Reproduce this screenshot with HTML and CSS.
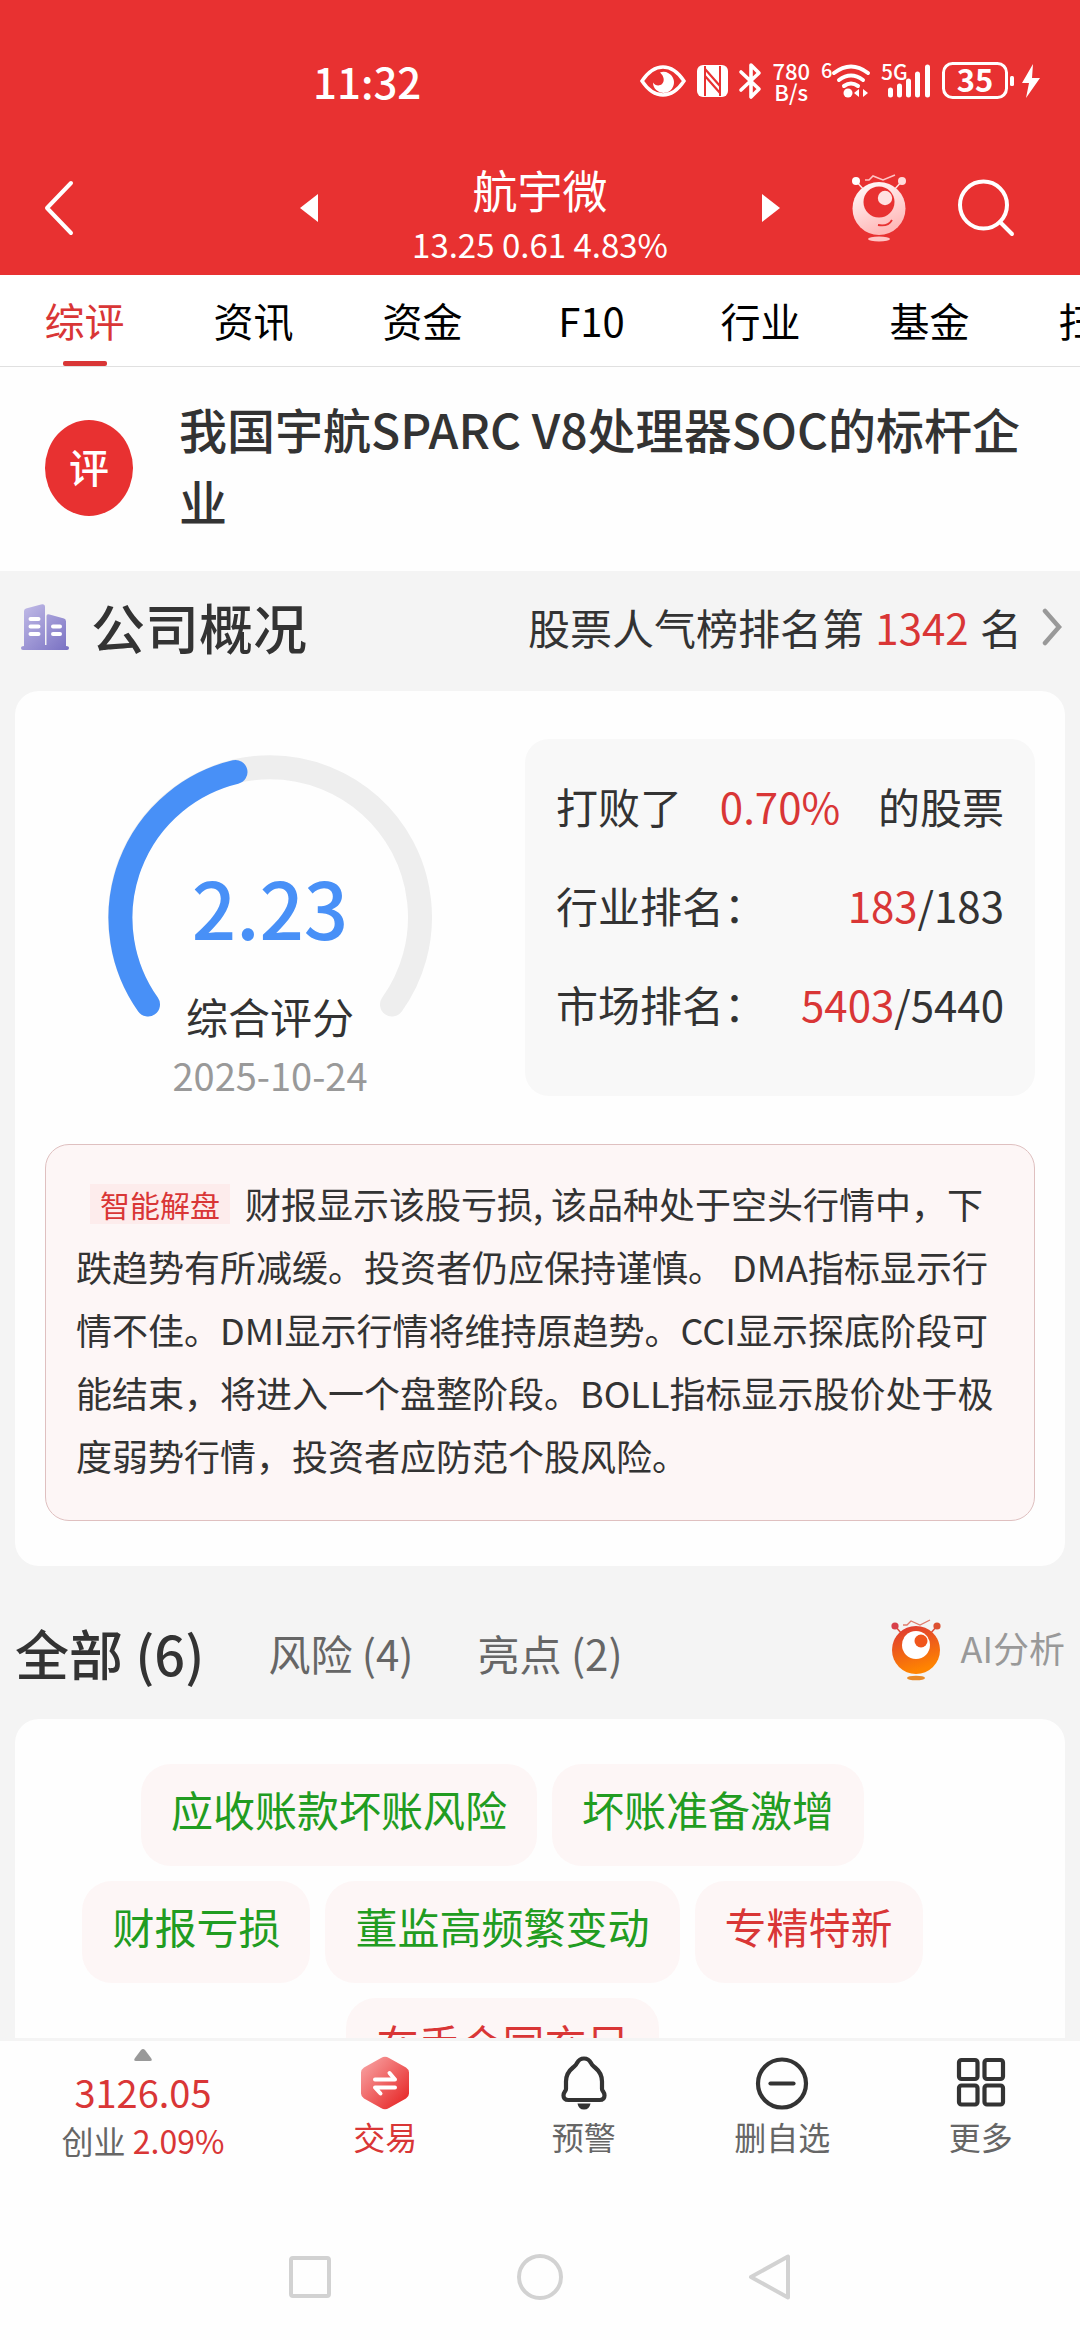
FILE: index.html
```html
<!DOCTYPE html>
<html lang="zh-CN">
<head>
<meta charset="utf-8">
<meta name="viewport" content="width=device-width, initial-scale=1">
<title>航宇微 - 综评</title>
<link rel="stylesheet" href="styles.css">
</head>
<body>
<div class="app">
  <header class="header">
    <div class="status">
      <time class="status-time">11:32</time>
      <div class="status-icons">
        <svg width="46" height="32" viewBox="0 0 46 32"><path d="M2 16C8 7 15 2 23 2s15 5 21 14c-6 9-13 14-21 14S8 25 2 16z" fill="none" stroke="#fff" stroke-width="3.400"/><path d="M20 7.500a10.500 10.500 0 1 1-7 10c2 3 6 4 9 1.500 3-3 2-8-2-11.500z" fill="#fff"/></svg>
        <svg width="31" height="32" viewBox="0 0 31 32"><rect width="31" height="32" rx="6" fill="#fff"/><path d="M8 1v30M23 1v30" stroke="#e83131" stroke-width="2"/><path d="M8 4l15 17M8 11l15 17" stroke="#e83131" stroke-width="2.200"/></svg>
        <svg width="22" height="36" viewBox="0 0 22 36"><path d="M2 9l18 17-8 8V2l8 8L2 27" fill="none" stroke="#fff" stroke-width="3.600" stroke-linejoin="round" stroke-linecap="round"/></svg>
        <div class="net-speed"><span>780</span><span>B/s</span></div>
        <svg class="status-svg" width="49" height="36" viewBox="0 0 49 36"><text x="0" y="15" font-size="20">6</text><g fill="none" stroke="#fff" stroke-width="4" stroke-linecap="round"><path d="M13 10q17-13 34 0"/><path d="M18 17q12-9 24 0"/><path d="M23 23q7-5 14 0"/></g><circle cx="27" cy="30" r="4.500" fill="#fff"/><path d="M33 30l5-4v8zM47 30l-5-4v8z" fill="#fff"/></svg>
        <svg class="status-svg" width="50" height="36" viewBox="0 0 50 36"><text x="0" y="17" font-size="21">5G</text><path d="M9.500 32v-5M18.500 32v-9M27.500 32v-14M36.500 32v-21M46.500 32v-28" stroke="#fff" stroke-width="5" stroke-linecap="round"/></svg>
        <svg class="status-svg battery" width="98" height="38" viewBox="0 0 98 38"><rect x="1.500" y="1.500" width="63" height="34" rx="9" fill="none" stroke="#fff" stroke-width="3"/><text x="33" y="30" font-size="31" text-anchor="middle">35</text><rect x="68" y="14" width="4" height="10" rx="1.500" fill="#fff"/><path d="M91 2L80 21h7l-3 15 14-20h-8z" fill="#fff"/></svg>
      </div>
    </div>
    <div class="titlebar">
      <button class="icon-btn back" type="button" aria-label="返回"><svg width="30" height="56" viewBox="0 0 30 56"><path d="M27 3L3 28l24 25" fill="none" stroke="#fff" stroke-width="4" stroke-linecap="round" stroke-linejoin="round"/></svg></button>
      <div class="stock">
        <button class="icon-btn" type="button" aria-label="上一只"><svg width="18" height="28" viewBox="0 0 18 28"><path d="M0 14L18 0v28z" fill="#fff"/></svg></button>
        <div class="stock-info">
          <h1 class="stock-name">航宇微</h1>
          <p class="stock-quote">13.25 0.61 4.83%</p>
        </div>
        <button class="icon-btn" type="button" aria-label="下一只"><svg width="18" height="28" viewBox="0 0 18 28"><path d="M18 14L0 0v28z" fill="#fff"/></svg></button>
      </div>
      <div class="actions">
        <button class="icon-btn" type="button" aria-label="智能助手">
          <svg width="54" height="68" viewBox="0 0 54 68">
            <defs><linearGradient id="pale" x1="0" y1="0" x2="0.400" y2="1"><stop offset="0" stop-color="#fff"/><stop offset="1" stop-color="#ffb9b9"/></linearGradient></defs>
            <path d="M4 7l8 9M50 7l-8 9" stroke="#ffe4e4" stroke-width="1.500"/>
            <circle cx="4" cy="7" r="4" fill="#fff"/><circle cx="50" cy="7" r="4" fill="#ffdcdc"/>
            <path d="M13 6h4l4-4 10 4 12-5" fill="none" stroke="#ffc4c4" stroke-width="1.500"/>
            <circle cx="27" cy="34.500" r="26.500" fill="url(#pale)"/>
            <circle cx="27" cy="28" r="15.500" fill="#e83131"/><circle cx="33" cy="24" r="7.200" fill="#ffe0e0"/>
            <path d="M26 51q10 2 14-5" fill="none" stroke="#e83131" stroke-width="1.800"/>
            <ellipse cx="27" cy="65" rx="11" ry="2.600" fill="#ffc4c4"/>
          </svg>
        </button>
        <button class="icon-btn" type="button" aria-label="搜索"><svg width="56" height="58" viewBox="0 0 56 58"><circle cx="25.500" cy="26" r="23.500" fill="none" stroke="#fff" stroke-width="4"/><path d="M42 43l12 12" stroke="#fff" stroke-width="4" stroke-linecap="round"/></svg></button>
      </div>
    </div>
  </header>

  <nav class="tabs">
    <a class="tab tab-active" href="#zp">综评</a>
    <a class="tab" href="#zx">资讯</a>
    <a class="tab" href="#zj">资金</a>
    <a class="tab" href="#f10">F10</a>
    <a class="tab" href="#hy">行业</a>
    <a class="tab" href="#jj">基金</a>
    <a class="tab" href="#sl">扫雷</a>
  </nav>

  <main class="content" id="zp">
    <section class="summary">
      <span class="summary-badge">评</span>
      <h2 class="summary-text">我国宇航SPARC V8处理器SOC的标杆企业</h2>
    </section>

    <div class="section-head">
      <svg width="48" height="46" viewBox="0 0 48 46">
        <defs><linearGradient id="violet" x1="0" y1="0" x2="1" y2="1"><stop offset="0" stop-color="#c3bde8"/><stop offset="1" stop-color="#7870c2"/></linearGradient></defs>
        <path d="M3 42V7q0-2 2-2.500L20 .400q4-1 4 2.600V41h1.500V12q0-2.500 3-1.500L43 14.500q2 .5 2 3V42q3 0 3 2t-2 2H2q-2 0-2-2t3-2z" fill="url(#violet)"/>
        <path d="M9.500 15h8M9.500 22.500h8M9.500 30h8M32 22.500h7M32 30h7" stroke="#fff" stroke-width="4" stroke-linecap="round"/>
      </svg>
      <h2 class="section-title">公司概况</h2>
      <a class="rank-link" href="#rank">
        <span>股票人气榜排名第 <b class="rank-no">1342</b> 名</span>
        <svg width="20" height="36" viewBox="0 0 20 36"><path d="M3 2l14 16L3 34" fill="none" stroke="#999" stroke-width="4.500" stroke-linecap="round"/></svg>
      </a>
    </div>

    <section class="card">
      <div class="overview">
        <div class="gauge">
          <svg class="gauge-arc" width="324" height="262" viewBox="0 0 324 262" fill="none" stroke-width="24" stroke-linecap="round">
            <path d="M40 248.500A150 150 0 1 1 284 248.500" stroke="#eee"/>
            <path d="M40 248.500A150 150 0 0 1 127.500 16" stroke="#4890f7"/>
          </svg>
          <div class="gauge-text">
            <strong class="gauge-value">2.23</strong>
            <span class="gauge-label">综合评分</span>
            <time class="gauge-date">2025-10-24</time>
          </div>
        </div>
        <dl class="ranks">
          <div class="rank-row"><dt>打败了</dt><dd class="red">0.70%</dd><dd>的股票</dd></div>
          <div class="rank-row"><dt>行业排名：</dt><dd><span class="red">183</span>/183</dd></div>
          <div class="rank-row"><dt>市场排名：</dt><dd><span class="red">5403</span>/5440</dd></div>
        </dl>
      </div>
      <p class="analysis"><span class="analysis-tag">智能解盘</span>财报显示该股亏损, 该品种处于空头行情中，下跌趋势有所减缓。投资者仍应保持谨慎。 DMA指标显示行情不佳。DMI显示行情将维持原趋势。CCI显示探底阶段可能结束，将进入一个盘整阶段。BOLL指标显示股价处于极度弱势行情，投资者应防范个股风险。</p>
    </section>

    <div class="filters">
      <button class="filter filter-active" type="button">全部 (6)</button>
      <button class="filter" type="button">风险 (4)</button>
      <button class="filter" type="button">亮点 (2)</button>
      <a class="ai-link" href="#ai">
        <svg width="50" height="62" viewBox="0 0 50 62">
          <defs><linearGradient id="flame" x1="0" y1="0" x2="0.300" y2="1"><stop offset="0" stop-color="#dc3535"/><stop offset="1" stop-color="#ff8400"/></linearGradient></defs>
          <path d="M4 7l7 8M46 7l-7 8" stroke="#e0503c" stroke-width="1.500"/>
          <circle cx="4" cy="7" r="3.600" fill="#d8404a"/><circle cx="46" cy="7" r="3.600" fill="#dc5030"/>
          <path d="M12 6h4l4-4 9 4 10-5" fill="none" stroke="#e07a6a" stroke-width="1.300"/>
          <circle cx="25" cy="31" r="24" fill="url(#flame)"/>
          <circle cx="25" cy="26" r="14" fill="#fff"/><circle cx="30" cy="22" r="6.500" fill="#f0561c"/>
          <ellipse cx="25" cy="59" rx="9" ry="2.300" fill="#e88a28"/>
        </svg>
        <span class="ai-label">AI分析</span>
      </a>
    </div>

    <section class="card chips">
      <a class="chip" href="#c1">应收账款坏账风险</a>
      <a class="chip" href="#c2">坏账准备激增</a>
      <a class="chip" href="#c3">财报亏损</a>
      <a class="chip" href="#c4">董监高频繁变动</a>
      <a class="chip chip-good" href="#c5">专精特新</a>
      <a class="chip chip-good" href="#c6">在手合同充足</a>
    </section>
  </main>

  <footer class="toolbar">
    <button class="index" type="button">
      <svg width="18" height="12" viewBox="0 0 18 12"><path d="M9 0q1 0 2 1l6 8q2 3-1 3H2q-3 0-1-3l6-8q1-1 2-1z" fill="#999"/></svg>
      <span class="index-value">3126.05</span>
      <span class="index-change">创业 <span class="red">2.09%</span></span>
    </button>
    <button class="tool tool-active" type="button">
      <svg width="50" height="54" viewBox="0 0 50 54">
        <defs><linearGradient id="ruby" x1="0" y1="0" x2="1" y2="1"><stop offset="0.100" stop-color="#f79c9c"/><stop offset="0.850" stop-color="#e83131"/></linearGradient></defs>
        <path d="M21 2q4-2.500 8 0l17 9.500q3 2 3 5v21q0 3-3 5L29 52q-4 2.500-8 0L4 42.500q-3-2-3-5v-21q0-3 3-5z" fill="url(#ruby)"/>
        <path d="M15 23.500h20l-5.500-6.500M35 31.500H15l5.500 6" fill="none" stroke="#fff" stroke-width="4" stroke-linecap="round" stroke-linejoin="round"/>
      </svg>
      交易
    </button>
    <button class="tool" type="button">
      <svg width="50" height="54" viewBox="0 0 50 54"><path d="M25 2.500c3.500 0 5.500 1.500 7 4.500 1 2.500 2 3 4 4.500 5 4 7 9 7 14v7.500c0 2 2.500 3 2.500 6.500 0 3-2 4.500-5 4.500h-31c-3 0-5-1.500-5-4.500 0-3.500 2.500-4.500 2.500-6.500v-7.500c0-5 2-10 7-14 2-1.500 3-2 4-4.500 1.500-3 3.500-4.500 7-4.500z" fill="none" stroke="#333" stroke-width="4.200"/><path d="M18.500 47.500h13q-1 6-6.500 6t-6.500-6z" fill="#333"/></svg>
      预警
    </button>
    <button class="tool" type="button">
      <svg width="54" height="54" viewBox="0 0 54 54"><circle cx="27" cy="27.500" r="24" fill="none" stroke="#333" stroke-width="4.200"/><path d="M15.500 27.500h23" stroke="#333" stroke-width="4.200" stroke-linecap="round"/></svg>
      删自选
    </button>
    <button class="tool" type="button">
      <svg width="50" height="54" viewBox="0 0 50 54" fill="none" stroke="#333" stroke-width="4.200"><rect x="3" y="4" width="18.500" height="19" rx="2.500"/><rect x="28.500" y="4" width="18.500" height="19" rx="2.500"/><rect x="3" y="29.500" width="18.500" height="19" rx="2.500"/><rect x="28.500" y="29.500" width="18.500" height="19" rx="2.500"/></svg>
      更多
    </button>
  </footer>

  <nav class="sysnav">
    <button class="icon-btn" type="button" aria-label="最近任务"><svg width="46" height="48" viewBox="0 0 46 48"><rect x="4" y="5" width="38" height="38" rx="2" fill="none" stroke="#d2d2d2" stroke-width="4"/></svg></button>
    <button class="icon-btn" type="button" aria-label="主屏幕"><svg width="46" height="48" viewBox="0 0 46 48"><circle cx="23" cy="24" r="21" fill="none" stroke="#d2d2d2" stroke-width="4"/></svg></button>
    <button class="icon-btn" type="button" aria-label="后退"><svg width="46" height="48" viewBox="0 0 46 48"><path d="M41 3.500v41L4 24z" fill="none" stroke="#d2d2d2" stroke-width="4" stroke-linejoin="round"/></svg></button>
  </nav>
</div>
</body>
</html>
```
FILE: styles.css
```css
* {
  box-sizing: border-box;
}

body {
  margin: 0;
  background: #fefefe;
  color: #333;
  font-family: "Noto Sans CJK SC", "Noto Sans", sans-serif;
  font-size: 42px;
  line-height: 48px;
}

h1,
h2,
p,
dl,
dd {
  margin: 0;
  font-weight: 400;
}

button {
  padding: 0;
  border: 0;
  background: none;
  color: inherit;
  font: inherit;
}

a {
  color: inherit;
  text-decoration: none;
}

svg {
  display: block;
  flex: none;
  overflow: visible;
}

.red {
  color: #d93636;
}

.app {
  display: flex;
  flex-direction: column;
  height: 100vh;
}

/* header */
.header {
  flex: none;
  background: #e83131;
  color: #fff;
}

.status {
  display: flex;
  align-items: center;
  justify-content: space-between;
  height: 141px;
  padding: 20px 40px 0 313px;
}

.status-time {
  font-size: 42px;
  font-weight: 500;
}

.status-icons {
  display: flex;
  align-items: center;
  gap: 11px;
}

.status-svg text {
  fill: #fff;
  font-weight: 500;
}

.battery text {
  font-weight: 700;
}

.net-speed {
  display: flex;
  flex-direction: column;
  align-items: center;
  font-size: 22px;
  font-weight: 500;
  line-height: 21px;
}

.titlebar {
  display: grid;
  grid-template-columns: 300px 1fr 300px;
  align-items: center;
  height: 134px;
}

.back {
  justify-self: start;
  margin-left: 44px;
}

.stock {
  display: flex;
  align-items: center;
  justify-content: space-between;
}

.stock-info {
  padding-top: 18px;
  text-align: center;
}

.stock-name {
  font-size: 45px;
  line-height: 54px;
}

.stock-quote {
  font-size: 33px;
  line-height: 54px;
}

.actions {
  display: flex;
  align-items: center;
  justify-content: flex-end;
  gap: 52px;
  padding-right: 66px;
}

/* section tabs */
.tabs {
  display: flex;
  flex: none;
  overflow: hidden;
  border-bottom: 1px solid #e0e0e0;
  background: #fff;
  color: #000;
  font-size: 40px;
}

.tab {
  display: flex;
  flex: none;
  flex-direction: column;
  align-items: center;
  width: 169px;
  height: 91px;
  padding-top: 21px;
}

.tab-active {
  color: #d93636;
}

.tab-active::after {
  content: "";
  width: 44px;
  height: 5px;
  margin-top: auto;
  border-radius: 2px;
  background: #d93636;
}

/* scrolling page */
.content {
  flex: 1;
  min-height: 0;
  overflow-y: auto;
  border-bottom: 3px solid #f4f4f4;
  background: #f4f4f4;
  scrollbar-width: none;
}

.summary {
  display: flex;
  align-items: center;
  gap: 46px;
  padding: 25px 45px 27px;
  background: #fefefe;
}

.summary-badge {
  display: flex;
  flex: none;
  align-items: center;
  justify-content: center;
  width: 88px;
  height: 96px;
  padding-bottom: 4px;
  border-radius: 50%;
  background: #e83131;
  color: #fff;
  font-size: 40px;
  font-weight: 500;
}

.summary-text {
  padding-bottom: 8px;
  font-size: 48px;
  font-weight: 500;
  line-height: 72px;
}

.section-head {
  display: flex;
  align-items: center;
  height: 120px;
  padding: 0 18px 8px 21px;
}

.section-title {
  margin-left: 22px;
  font-size: 54px;
  font-weight: 500;
}

.rank-link {
  display: flex;
  align-items: center;
  gap: 20px;
  margin-left: auto;
}

.rank-no {
  margin: 0 2px;
  color: #d93636;
  font-weight: 400;
}

.card {
  margin: 0 15px;
  padding: 48px 30px 45px;
  border-radius: 24px;
  background: #fefefe;
}

.overview {
  display: grid;
  grid-template-columns: 1fr 510px;
  gap: 30px;
}

.gauge {
  display: grid;
  justify-items: center;
  padding-top: 17px;
}

.gauge-arc,
.gauge-text {
  grid-area: 1 / 1;
}

.gauge-text {
  display: flex;
  flex-direction: column;
  align-items: center;
  padding-top: 108px;
}

.gauge-value {
  color: #4890f7;
  font-size: 78px;
  font-weight: 500;
  line-height: 84px;
}

.gauge-label {
  margin-top: 44px;
}

.gauge-date {
  margin-top: 15px;
  color: #999;
  font-size: 38px;
  line-height: 40px;
}

.ranks {
  display: flex;
  flex-direction: column;
  gap: 51px;
  padding: 43px 31px 68px;
  border-radius: 24px;
  background: #f8f8f8;
}

.rank-row {
  display: flex;
  justify-content: space-between;
}

.analysis {
  margin-top: 48px;
  padding: 27px 29px 33px 30px;
  border: 1px solid #dfc0c0;
  border-radius: 24px;
  background: #fdf6f6;
  font-size: 36px;
  line-height: 63px;
}

.analysis-tag {
  display: inline-block;
  margin: 0 15px 0 14px;
  padding: 0 10px;
  background: #fdecec;
  color: #d93636;
  font-size: 30px;
  line-height: 40px;
  vertical-align: 2px;
}

.filters {
  display: flex;
  align-items: center;
  gap: 64px;
  height: 153px;
  padding: 20px 15px 0;
  color: #666;
}

.filter-active {
  color: #333;
  font-size: 54px;
  font-weight: 500;
}

.ai-link {
  display: flex;
  align-items: center;
  gap: 20px;
  margin-left: auto;
  padding-bottom: 6px;
  color: #999;
  font-size: 36px;
}

.ai-label {
  padding-bottom: 6px;
}

.chips {
  display: flex;
  flex-wrap: wrap;
  justify-content: center;
  gap: 15px;
  padding: 45px 90px 45px 15px;
}

.chip {
  padding: 21px 30px 33px;
  border-radius: 30px;
  background: #fdf6f6;
  color: #219c21;
}

.chip-good {
  color: #d93636;
}

/* bottom bars */
.toolbar {
  display: grid;
  flex: none;
  grid-template-columns: 286px repeat(4, 1fr);
  height: 173px;
  color: #666;
  font-size: 32px;
}

.index,
.tool {
  display: flex;
  flex-direction: column;
  align-items: center;
}

.index {
  padding-top: 8px;
}

.index-value {
  margin-top: 7px;
  color: #d93636;
  font-size: 38px;
}

.tool {
  gap: 2px;
  padding-top: 15px;
}

.tool-active {
  color: #d93636;
}

.sysnav {
  display: flex;
  flex: none;
  align-items: center;
  justify-content: center;
  gap: 184px;
  height: 126px;
}
```
